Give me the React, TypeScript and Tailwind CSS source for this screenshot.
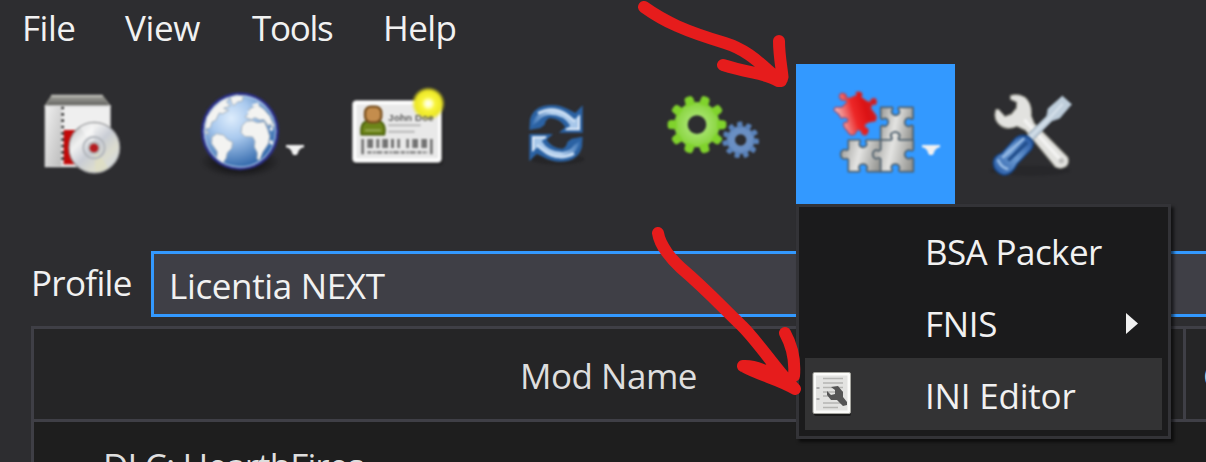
import type { ReactNode } from "react";

function DropArrow({ x, y }: { x: number; y: number }) {
  return <path d={`M${x} ${y}h54v7l-8 2-9 9v4l-5 8h-10l-5-8v-4l-9-9-8-2z`} fill="#f1f1f1" />;
}

function BoxIcon() {
  return (
    <g transform="translate(30 16) scale(.33333)">
      <defs>
        <linearGradient id="boxSide" x1="0" x2="1" y1="0" y2="1">
          <stop offset="0" stopColor="#eee" />
          <stop offset="1" stopColor="#bdbdbd" />
        </linearGradient>
        <linearGradient id="boxTop" x1="0" x2="0" y1="0" y2="1">
          <stop offset="0" stopColor="#a9a9a3" />
          <stop offset="1" stopColor="#5d5d5a" />
        </linearGradient>
        <linearGradient id="disc" x1="0" x2="1" y1="0" y2="1">
          <stop offset="0" stopColor="#b4b7ba" />
          <stop offset=".3" stopColor="#f1f1f1" />
          <stop offset=".5" stopColor="#c9cdd5" />
          <stop offset=".7" stopColor="#dcdccf" />
          <stop offset="1" stopColor="#d0d9ea" />
        </linearGradient>
      </defs>
      <path d="M66 46H216L240 78H46z" fill="url(#boxTop)" stroke="#888883" strokeWidth="5" />
      <path d="M64 48h154" stroke="#b9b9b3" strokeWidth="6" />
      <path d="M46 78H240V260H46z" fill="#efefef" stroke="#d8d8d8" strokeWidth="4" />
      <path d="M48 80H94V258H48z" fill="url(#boxSide)" />
      <path d="M101 150h50v103h-50z" fill="#c20a0a" />
      <path d="M98 80v172" stroke="#333" strokeWidth="8" strokeDasharray="8 11" />
      <circle cx="193" cy="203" r="76" fill="url(#disc)" stroke="#98999b" strokeWidth="4" />
      <path d="M193 203L150 142A75 75 0 0 1 190 129z" fill="#fff" opacity=".4" />
      <path d="M193 203L236 264A75 75 0 0 1 196 277z" fill="#e4e1b4" opacity=".4" />
      <circle cx="192" cy="203" r="32" fill="none" stroke="#b4b8bd" strokeWidth="6" />
      <circle cx="192" cy="203" r="19" fill="#b4b4b4" />
      <circle cx="192" cy="204" r="13" fill="#b51c20" />
    </g>
  );
}

function GlobeIcon() {
  return (
    <g transform="translate(30 16) scale(.33333)">
      <defs>
        <radialGradient id="sea" cx=".38" cy=".32" r=".7">
          <stop offset="0" stopColor="#deedfc" />
          <stop offset=".4" stopColor="#a9c9ee" />
          <stop offset="1" stopColor="#2f66aa" />
        </radialGradient>
        <radialGradient id="globeShade">
          <stop offset=".5" stopColor="#141416" stopOpacity=".9" />
          <stop offset="1" stopColor="#141416" stopOpacity="0" />
        </radialGradient>
      </defs>
      <ellipse cx="150" cy="245" rx="118" ry="48" fill="url(#globeShade)" />
      <circle cx="150" cy="154" r="117" fill="#2b2f86" />
      <circle cx="150" cy="154" r="109" fill="url(#sea)" />
      <g fill="#f3f3f1" stroke="#a3b0bc" strokeWidth="3" strokeLinejoin="round">
        <path d="M46 140L50 112L72 82L98 60L121 52L110 66L121 78L101 85L116 91L97 102L88 99L77 121L66 126L61 143L47 148L57 162L47 161z" />
        <path d="M121 52L140 45L160 49L157 63L143 66L131 77L124 67z" />
        <path d="M66 171L80 161L101 165L111 177L128 187L125 205L112 218L108 235L99 249L80 236L82 215L65 191z" />
        <path d="M165 111L181 95L176 88L203 75L222 88L240 109L252 137L247 145L241 131L236 139L222 119L209 120L195 113L184 119L169 113z" />
        <path d="M156 137L169 124L187 122L202 128L223 125L233 148L239 169L235 191L218 217L209 240L201 238L202 218L193 201L195 184L188 171L165 170L153 158z" />
      </g>
      <path d="M188 77l18-5M173 98l12-3M240 145l8 5M242 181l3 12" stroke="#f1f1ef" strokeWidth="9" />
      <circle cx="150" cy="154" r="107" fill="none" stroke="#c3d6f1" strokeWidth="4" opacity=".7" />
      <DropArrow x={288} y={195} />
    </g>
  );
}

function CardIcon() {
  return (
    <g transform="translate(20 16) scale(.33333)">
      <defs>
        <radialGradient id="spark">
          <stop offset="0" stopColor="#fff" />
          <stop offset=".22" stopColor="#ffffb0" />
          <stop offset=".4" stopColor="#f8f43c" />
          <stop offset=".75" stopColor="#ece726" />
          <stop offset="1" stopColor="#e8e018" stopOpacity="0" />
        </radialGradient>
      </defs>
      <rect x="38" y="70" width="272" height="186" rx="12" fill="#1c1c1e" opacity=".55" />
      <rect x="38" y="62" width="266" height="185" rx="10" fill="#fff" stroke="#bdbdbd" strokeWidth="3" />
      <rect x="49" y="73" width="245" height="162" fill="#e9e9e9" />
      <path d="M64 164q-5-36 20-42h32q24 8 17 42z" fill="#6d8519" stroke="#465b08" strokeWidth="5" />
      <path d="M75 151h48" stroke="#93a64e" strokeWidth="7" />
      <rect x="75" y="80" width="49" height="47" rx="18" fill="#c48d4d" stroke="#79501f" strokeWidth="7" />
      <path d="M145 136h97M145 155h79" stroke="#b7b7b7" strokeWidth="6" />
      <path d="M64 177h8v46h-8zM82 177h17v27H82zM109 177h9v27h-9zM127 177h17v27h-17zM153 177h9v27h-9zM172 177h8v27h-8zM199 177h8v27h-8zM217 177h17v27h-17zM244 177h17v27h-17zM270 177h8v46h-8z" fill="#737373" />
      <path d="M82 217h180" stroke="#8d8d8d" strokeWidth="8" strokeDasharray="13 4 7 3 18 5" />
      <circle cx="265" cy="71" r="51" fill="url(#spark)" />
      <text x="145" y="122" fontFamily="Liberation Sans, sans-serif" fontSize="29" fontWeight="700" fill="#555" textLength="136">John Doe</text>
    </g>
  );
}

function RefreshIcon() {
  return (
    <g transform="translate(30 16) scale(.33333)">
      <defs>
        <linearGradient id="refreshBlue" x1="0" x2="1" y1="0" y2="0">
          <stop offset="0" stopColor="#3871b4" />
          <stop offset=".4" stopColor="#b6d1ee" />
          <stop offset="1" stopColor="#a3c4e8" />
        </linearGradient>
      </defs>
      <ellipse cx="143" cy="238" rx="80" ry="16" fill="#1c1c1e" opacity=".45" />
      {[0, 180].map((turn) => (
        <g key={turn} transform={`rotate(${turn} 138 160)`}>
          <path d="M58 150L60 118Q69 86 100 78Q139 68 175 88L196 99L218 76V158H147L166 141Q151 116 119 114Q106 119 104 134L91 144z" fill="#2b62a3" />
          <path d="M66 137Q72 102 105 89Q143 79 172 101L193 119L210 103V150H163L181 137Q163 105 119 104Q94 107 84 124z" fill="url(#refreshBlue)" />
          <path d="M84 100Q132 74 178 111L195 125" fill="none" stroke="#c9ddf3" strokeWidth="9" />
          <path d="M207 107v41h-39" fill="none" stroke="#e6effa" strokeWidth="6" />
        </g>
      ))}
    </g>
  );
}

function GearsIcon() {
  return (
    <g transform="translate(19 16) scale(.33333)">
      <defs>
        <radialGradient id="greenGear" gradientUnits="userSpaceOnUse" cx="126" cy="134" r="88">
          <stop offset=".3" stopColor="#a5e36c" />
          <stop offset="1" stopColor="#78cc24" />
        </radialGradient>
      </defs>
      <circle cx="126" cy="134" r="48" fill="none" stroke="url(#greenGear)" strokeWidth="40" />
      {[0, 36, 72, 108, 144, 180, 216, 252, 288, 324].map((a) => (
        <path key={a} transform={`rotate(${a} 126 134)`} d="M188 121L204 122Q213 122 213 128V140Q212 146 204 147L188 147z" fill="#80d32c" stroke="#80d32c" strokeWidth="2" />
      ))}
      <circle cx="257" cy="180" r="29" fill="none" stroke="#6a8fc3" strokeWidth="24" />
      {[5, 38, 71, 103, 136, 169, 201, 234, 267, 300, 332].map((a) => (
        <path key={a} transform={`rotate(${a} 257 180)`} d="M293 171L309 172Q313 175 312 187L293 189z" fill="#5a82b9" />
      ))}
    </g>
  );
}

const tile = "M272 142H306Q311 144 305 151Q303 164 317 166Q331 164 328 151Q322 144 328 142H369V176Q366 179 359 174Q346 173 344 187Q346 201 359 199Q366 194 369 198V240H328Q324 236 329 229Q330 217 315 216Q300 218 303 230Q308 236 304 240H272V200Q276 194 283 199Q294 198 295 186Q294 174 283 175Q276 180 272 174z";

function PuzzleIcon() {
  return (
    <g transform="translate(-6 -4) scale(.33333)">
      <defs>
        <linearGradient id="steel" x1="0" x2="1" y1=".4" y2=".6">
          <stop offset="0" stopColor="#a3a3a0" />
          <stop offset=".45" stopColor="#e4e4e2" />
          <stop offset="1" stopColor="#969692" />
        </linearGradient>
        <linearGradient id="redPiece" x1="0" x2="1" y1=".65" y2=".35">
          <stop offset="0" stopColor="#f3dada" />
          <stop offset=".48" stopColor="#ed2727" />
          <stop offset=".75" stopColor="#db1214" />
          <stop offset="1" stopColor="#ca2028" />
        </linearGradient>
      </defs>
      <g fill="url(#steel)" stroke="#50616e" strokeWidth="5" strokeLinejoin="round">
        <path d={tile} />
        <path d="M175 240H208Q213 243 208 249Q207 261 219 262Q232 260 230 249Q225 243 230 240H272V335H233Q227 331 232 325Q231 312 219 312Q206 313 207 325Q212 331 207 335H175V299Q171 293 165 297Q153 297 152 283Q153 270 165 269Q171 273 175 268z" />
        <path d="M272 240H303Q309 235 303 229Q302 217 316 216Q330 218 328 230Q323 236 328 240H370V269Q366 275 359 270Q346 270 344 283Q346 297 359 296Q366 291 370 297V335H330Q324 331 329 325Q328 312 315 312Q302 314 304 325Q309 331 304 335H272V297Q267 290 260 296Q250 296 248 283Q250 269 260 270Q267 275 272 269z" />
      </g>
      <path d="M170 127Q169 119 158 121Q147 117 148 107Q151 97 162 100Q172 104 169 114L182 113L197 106Q202 104 197 99Q205 92 214 98Q219 105 214 111L229 122L239 126Q244 113 256 115Q264 125 257 134L246 135L243 145L257 164Q264 174 255 184L237 187L226 193Q222 202 234 206Q238 216 229 225Q216 228 213 214L204 209L193 224Q179 228 174 216L165 205Q157 195 163 187Q176 188 173 177Q164 170 154 175L145 162L132 151Q132 139 146 142L157 141z" fill="url(#redPiece)" stroke="#9c5478" strokeWidth="4" strokeLinejoin="round" />
      <DropArrow x={396} y={255} />
    </g>
  );
}

function ToolsIcon() {
  return (
    <g transform="translate(25 16) scale(.33333)">
      <defs>
        <linearGradient id="handle" x1="0" x2="1" y1="1" y2="0">
          <stop offset="0" stopColor="#2356a1" />
          <stop offset=".5" stopColor="#6b9ad2" />
          <stop offset="1" stopColor="#1d4f9b" />
        </linearGradient>
      </defs>
      <ellipse cx="150" cy="272" rx="120" ry="15" fill="#1b1b1d" opacity=".3" />
      <path d="M91 47Q111 39 134 51Q157 68 154 107L163 130L263 231Q270 247 259 259Q244 270 226 261L136 151L111 139Q76 155 53 129Q39 112 48 88L56 88L75 109L94 102L109 84L110 67L91 58z" fill="#e2e2df" stroke="#8a8a82" strokeWidth="4" strokeLinejoin="round" />
      <path d="M133 119L244 242" stroke="#f3f3f2" strokeWidth="10" />
      <circle cx="244" cy="242" r="8" fill="#bdbdbb" />
      <path d="M141 166L158 181L216 123L239 115L275 73L247 48L204 86L200 108z" fill="#bfcedb" stroke="#8b99a5" strokeWidth="3" />
      <path d="M151 171L211 112L248 71" fill="none" stroke="#d5e0ea" strokeWidth="7" />
      <path d="M129 166Q149 167 159 187Q161 204 143 219L112 251Q96 285 72 285Q42 278 40 249Q41 228 65 220L99 183Q112 166 129 166z" fill="url(#handle)" stroke="#174586" strokeWidth="5" />
      <path d="M55 242Q65 263 81 266M70 231L130 177" fill="none" stroke="#93b8e3" strokeWidth="9" strokeLinecap="round" />
      <path d="M88 238L138 190" stroke="#23508e" strokeWidth="11" strokeLinecap="round" />
    </g>
  );
}

function IniIcon() {
  return (
    <svg className="h-[52px] w-[46px] blur-[0.6px]" viewBox="0 0 46 52">
      <rect x="5" y="7" width="37" height="41" rx="2" fill="#1b1b1b" />
      <rect x="4" y="4.500" width="37.500" height="41" rx="1.500" fill="#fbfbf9" stroke="#a5a59f" />
      <rect x="7" y="7.500" width="31.500" height="35" fill="#e3e3e1" />
      <path d="M14 10.500h20M14 15h20M14 19.500h20M14 24h20M14 28h20M14 35h20M14 39.500h15" stroke="#b5b5b2" strokeWidth="1.700" />
      <path d="M7.500 20h3M7.500 31h3" stroke="#aaa" strokeWidth="2" />
      <path d="M22 19l7-1 5 6v5l4 5v3l-4 1-6-6h-6l-4-5v-4l4 4 4-1v-4z" fill="#555" />
    </svg>
  );
}

function ToolButton({ width, active, label, children }: { width: number; active?: boolean; label: string; children: ReactNode }) {
  return (
    <button aria-label={label} className={active ? "h-[140px] shrink-0 bg-[#3399ff]" : "h-[140px] shrink-0"} style={{ width }}>
      <svg className="h-[140px] w-full overflow-visible blur-[0.9px]" viewBox={`0 0 ${width} 140`}>{children}</svg>
    </button>
  );
}

export default function App() {
  return (
    <div className="relative flex h-[462px] w-[1206px] flex-col overflow-hidden bg-[#2d2d30] font-['Open_Sans','Noto_Sans',sans-serif] text-[35px] leading-[48px] whitespace-nowrap text-[#f1f1f1]">
      <nav className="flex h-16 shrink-0 pt-1 pl-[22px]">
        <span className="w-[103px] tracking-[-0.5px]">File</span>
        <span className="w-[127px] tracking-[-0.4px]">View</span>
        <span className="w-[131px] tracking-[-1.3px]">Tools</span>
        <span className="tracking-[-0.6px]">Help</span>
      </nav>
      <div className="flex h-[140px] shrink-0">
        <ToolButton width={160} label="Install mod"><BoxIcon /></ToolButton>
        <ToolButton width={160} label="Nexus"><GlobeIcon /></ToolButton>
        <ToolButton width={160} label="Profiles"><CardIcon /></ToolButton>
        <ToolButton width={156} label="Refresh"><RefreshIcon /></ToolButton>
        <ToolButton width={160} label="Executables"><GearsIcon /></ToolButton>
        <ToolButton width={159} label="Tool plugins" active><PuzzleIcon /></ToolButton>
        <ToolButton width={160} label="Settings"><ToolsIcon /></ToolButton>
      </div>
      <div className="flex h-[122px] shrink-0 pt-[47px] pl-[31px]">
        <span className="w-[120px] shrink-0 pt-2 tracking-[-0.7px]">Profile</span>
        <div className="h-[66px] flex-1 border-[3px] border-r-0 border-[#3399ff] bg-[#3f3f46] pt-2 pl-[15px]">
          <span className="tracking-[-0.35px]">Licentia NEXT</span>
        </div>
      </div>
      <div className="ml-[31px] flex h-[160px] shrink-0 flex-col border-t-[3px] border-l-[3px] border-[#3f3f46] bg-[#1e1e1e] text-[#dedede]">
        <div className="flex h-[93px] shrink-0 border-b-[3px] border-[#3f3f46] bg-[#252526]">
          <div className="w-[1152px] shrink-0 border-r-[3px] border-[#3f3f46] pt-[23px] text-center">
            <span className="tracking-[-0.5px]">Mod Name</span>
          </div>
          <span className="pt-[23px] pl-[17px]">Conflicts</span>
        </div>
        <div className="pt-5 pl-[69px]">
          <span className="tracking-[-0.9px]">DLC: HearthFires</span>
        </div>
      </div>

      <div className="absolute top-[204px] left-[796px] h-[235px] w-[375px] border-[3px] border-[#333337] bg-[#1b1b1c] p-1.5 pt-[7px] shadow-[3px_3px_3px_#0009]">
        <div className="flex h-[72px] items-center pt-1 pl-[120px]"><span className="tracking-[-0.6px]">BSA Packer</span></div>
        <div className="flex h-[72px] items-center justify-between pt-1 pr-6 pl-[120px]">
          <span className="tracking-[-0.3px]">FNIS</span>
          <svg className="mb-0.5 h-[21px] w-3" viewBox="0 0 12 21"><path d="M0 0L12 10.500L0 21z" fill="#f1f1f1" /></svg>
        </div>
        <div className="flex h-[72px] items-center bg-[#333334] pl-1">
          <IniIcon />
          <span className="ml-[70px] pt-1 tracking-[-0.2px]">INI Editor</span>
        </div>
      </div>

      <svg className="pointer-events-none absolute inset-0 h-full w-full" viewBox="0 0 1206 462" fill="none" stroke="#e61c1c" strokeWidth="12" strokeLinecap="round" strokeLinejoin="round">
        <path d="M644 7C665 22 685 31 725 43C751 51 764 68 781 81M779 41C779 56 782 70 782.500 77Q782 81 778 81C765 73 752 74 723 65" />
        <path d="M658 233C660 246 672 260 681 268C708 291 724 309 742 326C760 344 777 371 795 389M785 333Q796 353 794 376M743 366C759 365 771 374 795 389C779 379 761 376 743 366L781 374" />
      </svg>
    </div>
  );
}
